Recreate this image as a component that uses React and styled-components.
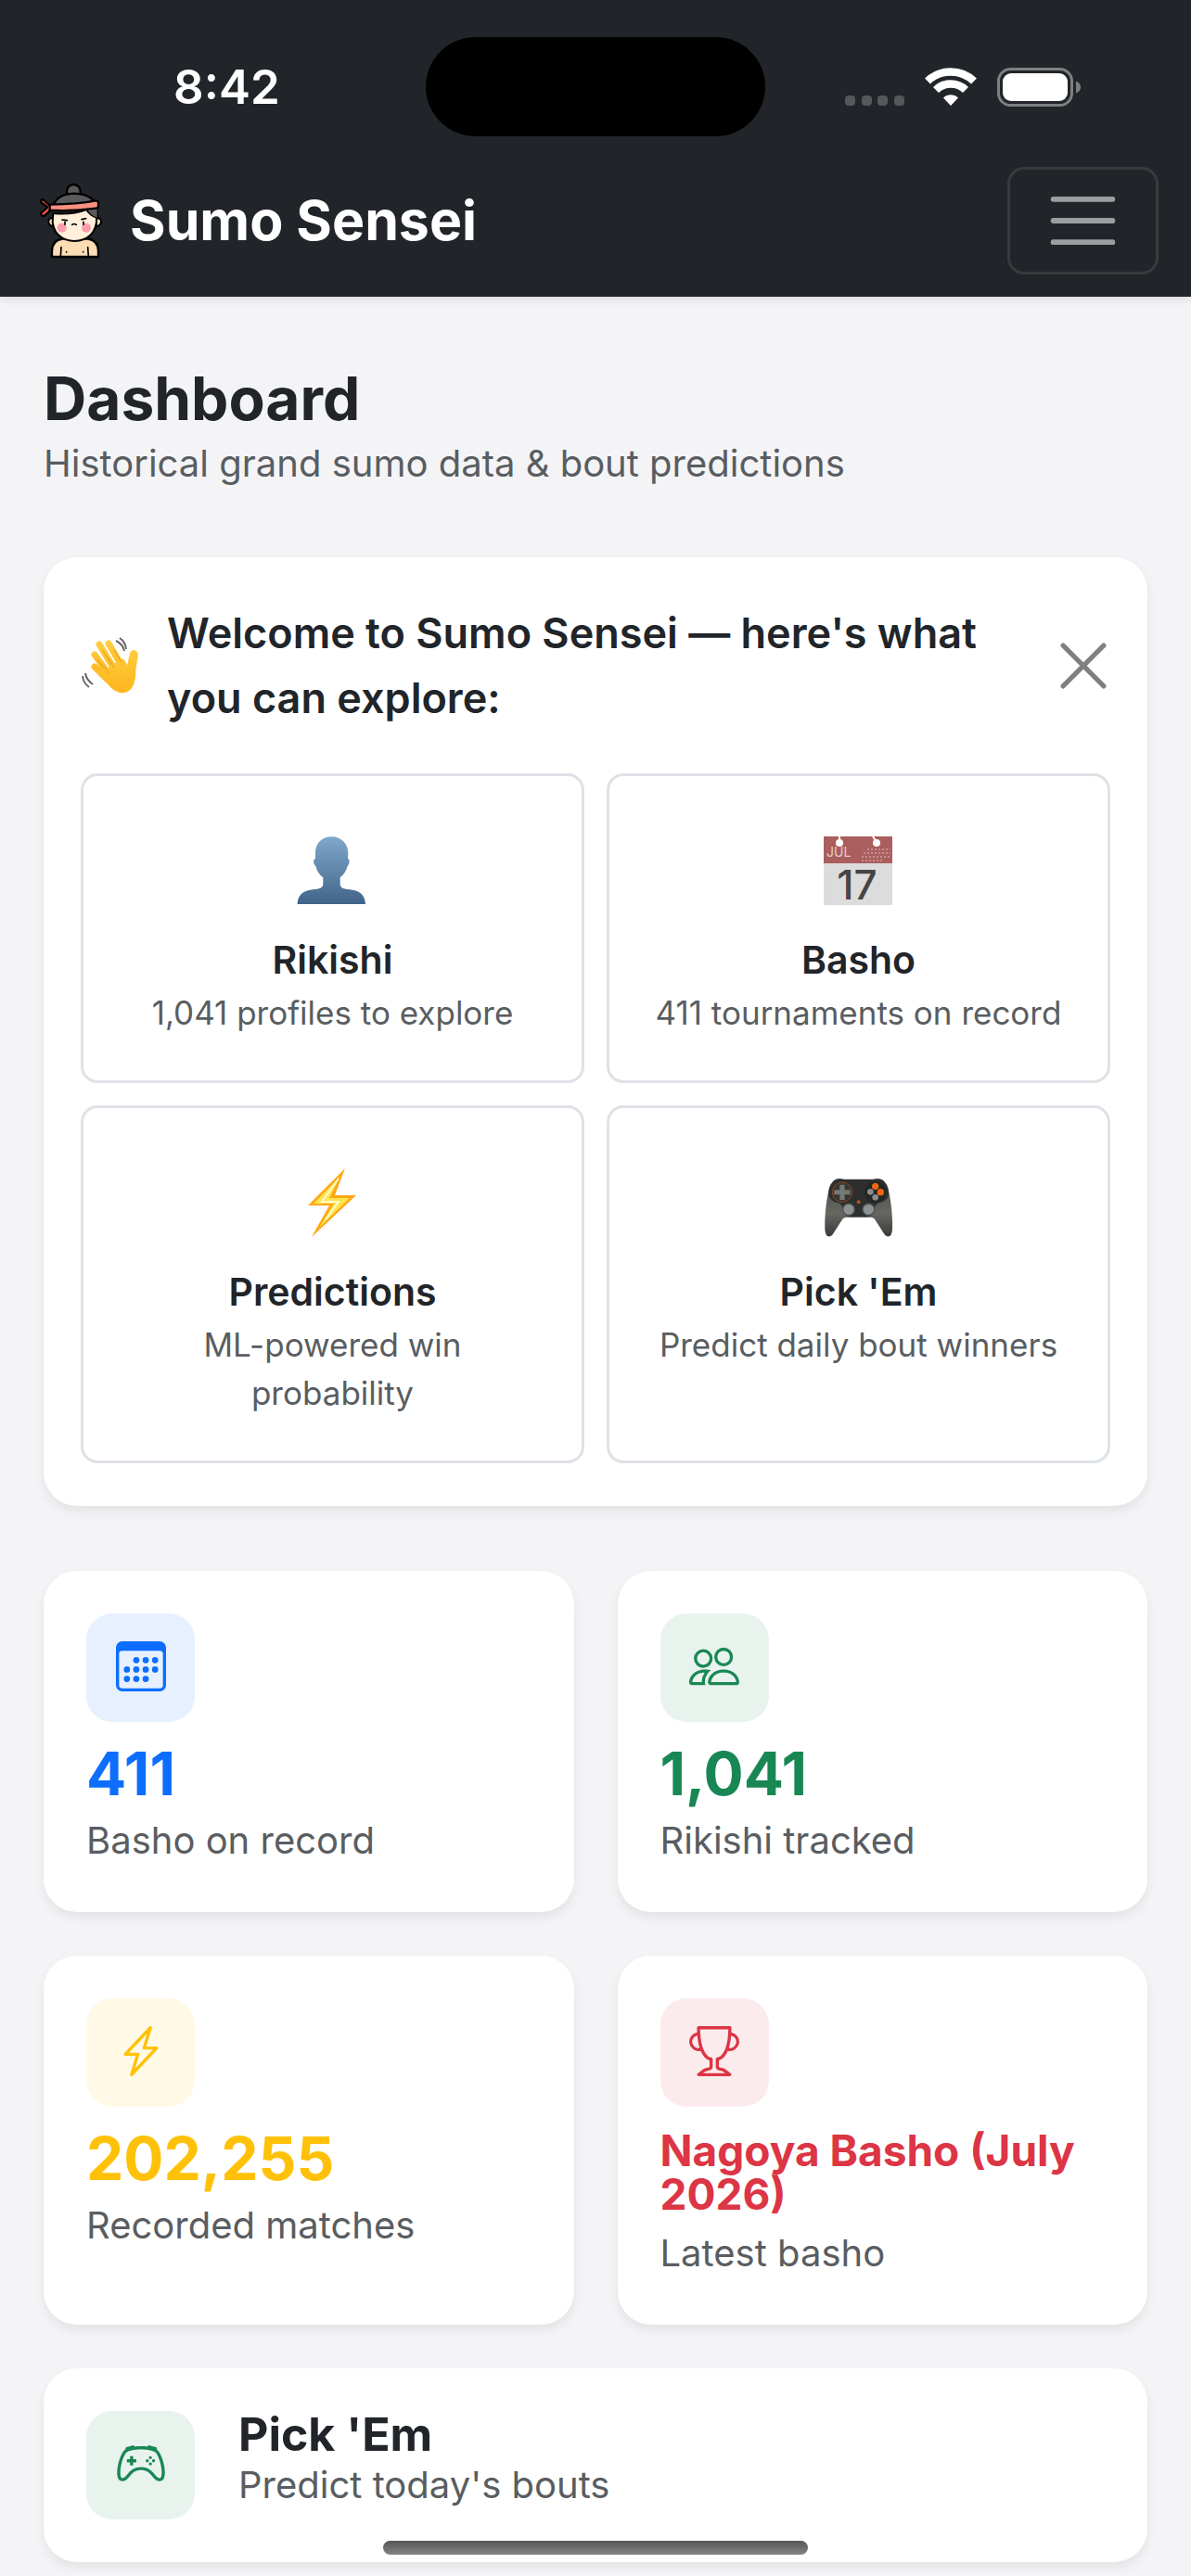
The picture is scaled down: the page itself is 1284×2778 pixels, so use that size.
import React from 'react';
import styled, { createGlobalStyle } from 'styled-components';
import {
  BsCalendar3,
  BsController,
  BsLightningCharge,
  BsPeople,
  BsTrophy,
} from 'react-icons/bs';

const tiles = [
  { icon: PersonIcon, title: 'Rikishi', text: '1,041 profiles to explore' },
  { icon: CalendarIcon, title: 'Basho', text: '411 tournaments on record' },
  { icon: BoltIcon, title: 'Predictions', text: 'ML-powered win probability' },
  { icon: GamepadIcon, title: "Pick 'Em", text: 'Predict daily bout winners' },
];

const stats = [
  { icon: BsCalendar3, value: '411', label: 'Basho on record', color: '#0d6efd', tint: '#e6f0ff' },
  { icon: BsPeople, value: '1,041', label: 'Rikishi tracked', color: '#198754', tint: '#e8f3ee' },
  { icon: BsLightningCharge, value: '202,255', label: 'Recorded matches', color: '#ffc107', tint: '#fff9e6' },
  { icon: BsTrophy, value: 'Nagoya Basho (July 2026)', label: 'Latest basho', color: '#dc3545', tint: '#fbebec', small: true },
];

const App = () => {
  return (
    <>
      <GlobalStyle />
      <Header>
        <StatusBar>
          <Time>8:42</Time>
          <Island />
          <StatusIcons />
        </StatusBar>
        <Navbar>
          <Brand href='#'>
            <Logo />
            Sumo Sensei
          </Brand>
          <Toggler type='button' aria-label='Toggle navigation'>
            <svg viewBox='0 0 30 30' fill='none' stroke='#9b9d9f' strokeWidth='2' strokeLinecap='round'>
              <path d='M4 7h22M4 15h22M4 23h22' />
            </svg>
          </Toggler>
        </Navbar>
      </Header>
      <Main>
        <PageTitle>Dashboard</PageTitle>
        <Muted>Historical grand sumo data &amp; bout predictions</Muted>
        <Welcome>
          <WelcomeHeader>
            <WaveIcon />
            <WelcomeTitle>Welcome to Sumo Sensei — here's what you can explore:</WelcomeTitle>
            <Close type='button' aria-label='Close'>
              <svg viewBox='0 0 48 48' fill='none' stroke='#808080' strokeWidth='5' strokeLinecap='round'>
                <path d='M3 3l42 42M45 3L3 45' />
              </svg>
            </Close>
          </WelcomeHeader>
          <TileGrid>
            {tiles.map(({ icon: Icon, title, text }) => (
              <Tile href='#' key={title}>
                <Icon />
                <TileTitle>{title}</TileTitle>
                <TileText>{text}</TileText>
              </Tile>
            ))}
          </TileGrid>
        </Welcome>
        <StatGrid>
          {stats.map(({ icon: Icon, value, label, color, tint, small }) => (
            <StatCard key={label}>
              <IconBox $color={color} $tint={tint}>
                <Icon />
              </IconBox>
              <StatValue $color={color} $small={small}>{value}</StatValue>
              <Muted>{label}</Muted>
            </StatCard>
          ))}
        </StatGrid>
        <PickCard href='#'>
          <IconBox $color='#198754' $tint='#e8f3ee'>
            <BsController />
          </IconBox>
          <div>
            <PickTitle>Pick 'Em</PickTitle>
            <Muted>Predict today's bouts</Muted>
          </div>
        </PickCard>
      </Main>
      <HomeIndicator />
    </>
  );
};

export default App;

function StatusIcons() {
  return (
    <StatusSvg viewBox='0 0 256 44'>
      <g fill='#55585b'>
        <rect x='0' y='31' width='11' height='11' rx='4' />
        <rect x='18' y='31' width='11' height='11' rx='4' />
        <rect x='35' y='31' width='11' height='11' rx='4' />
        <rect x='53' y='31' width='11' height='11' rx='4' />
      </g>
      <g fill='none' stroke='#fff' strokeWidth='8.5'>
        <path d='M89 15.500a36 36 0 0 1 50 0' />
        <path d='M98 25a23 23 0 0 1 32 0' />
      </g>
      <path d='M106 33.500a11.500 11.500 0 0 1 16 0L114 42z' fill='#fff' />
      <rect x='165.500' y='2.500' width='79' height='39' rx='13' fill='none' stroke='#7d8083' strokeWidth='3' />
      <rect x='170' y='7' width='70' height='30' rx='9' fill='#fff' />
      <path d='M249 15.500q5 2 5 6.500t-5 6.500z' fill='#7d8083' />
    </StatusSvg>
  );
}

function Logo() {
  return (
    <LogoSvg viewBox='30 45 219 261' stroke='#000' strokeWidth='7' strokeLinejoin='round' strokeLinecap='round'>
      <path d='M78 291v-20q2-34 34-38h82q32 4 34 38v20z' fill='#fbdcb4' />
      <path d='M106 288l2-28M196 288l-2-28' fill='none' strokeWidth='5' />
      <path d='M82 166q-16-2-15 12 2 14 16 14zM222 166q16-2 15 12-2 14-16 14z' fill='#fbdcb4' strokeWidth='6' />
      <circle cx='148' cy='79' r='22' fill='#5a5a5a' />
      <path d='M80 140q4-52 70-54 66 2 74 50l2 30h-14l-20-30z' fill='#5a5a5a' />
      <path d='M82 150q60 6 108-12 8 16 32 26v16q-10 58-72 60-62-4-70-60z' fill='#ffefdb' strokeWidth='6' />
      <path d='M192 136h32v28q-24-8-32-28z' fill='#5a5a5a' stroke='none' />
      <path d='M72 126l-22-20q-8-2-8 8l22 16-22 20q0 10 12 8l20-18z' fill='#f4533c' />
      <path d='M71 122q90-2 150-13 6 0 7 6v12q-1 6-8 7-74 10-149 6z' fill='#fa9080' />
      <circle cx='110' cy='197' r='15' fill='#ff9db0' stroke='none' />
      <circle cx='189' cy='197' r='15' fill='#ff9db0' stroke='none' />
      <path d='M111 171l16 2M174 170l14-3M120 178v9M180 178v9' fill='none' strokeWidth='5' />
      <path d='M143 187q7-5 14 0' fill='none' strokeWidth='5' />
      <path d='M125 275v1M179 275v1' fill='none' strokeWidth='5' />
    </LogoSvg>
  );
}

function WaveIcon() {
  return (
    <WaveSvg viewBox='-3 0 62 62'>
      <defs>
        <linearGradient id='hand' x1='0' y1='0' x2='0' y2='1'>
          <stop offset='0' stopColor='#ffcc3e' />
          <stop offset='1' stopColor='#fdb51c' />
        </linearGradient>
      </defs>
      <g fill='none' stroke='url(#hand)' strokeLinecap='round' strokeWidth='7'>
        <path d='M27 7l13 22M17 8l16 26M12 19l16 22M12 32l14 14' />
      </g>
      <path d='M22 36L42 23q4 3 5 8 2-9 3-14 3-5 7-2 3 2 1 10-2 9-2 18-2 15-12 17-8 1-15-6L14 37z' fill='url(#hand)' />
      <path d='M21 15l12 18M15 25l13 14M33 14l8 13' fill='none' stroke='#e89a12' strokeWidth='1' />
      <path d='M35 4q7 3 9 11M39 1q6 4 7 12M2 39q1 7 8 12M-1 42q1 8 7 12' fill='none' stroke='#666' strokeWidth='2' />
    </WaveSvg>
  );
}

function PersonIcon() {
  return (
    <TileSvg viewBox='27 57 240 240'>
      <defs>
        <linearGradient id='bust' x1='0' y1='0' x2='0' y2='1'>
          <stop offset='0' stopColor='#7fa8ca' />
          <stop offset='1' stopColor='#41648a' />
        </linearGradient>
      </defs>
      <path
        d='M142 67c34 0 55 24 54 58l-1 13c7 0 6 18-1 24-5 17-13 29-24 37v20c0 10 5 15 18 17 36 3 62 10 64 49H32c2-39 28-46 64-49 13-2 19-7 19-17v-20c-12-9-20-21-24-37-8-6-9-24-1-24v-13c-2-34 18-58 52-58z'
        fill='url(#bust)'
      />
    </TileSvg>
  );
}

function CalendarIcon() {
  return (
    <TileSvg viewBox='1 0 80 80'>
      <rect x='3' y='3' width='74' height='74' fill='#dcdcdc' />
      <path d='M3 3h74v29H3z' fill='#aa5f5e' />
      <circle cx='20' cy='10' r='4' fill='#fff' />
      <circle cx='60' cy='10' r='4' fill='#fff' />
      <path d='M20 9V3M60 9l-4-6' stroke='#fff' strokeWidth='2' />
      <g stroke='#c48f8e' strokeWidth='2' strokeDasharray='2 2'>
        <path d='M50 17h25M46 21h29M44 25h31M44 29h22' />
      </g>
      <CalendarMonth x='6' y='25'>JUL</CalendarMonth>
      <CalendarDay x='39' y='71'>17</CalendarDay>
    </TileSvg>
  );
}

function BoltIcon() {
  return (
    <TileSvg viewBox='0 0 80 80'>
      <path d='M53 3L13 43h23L17 77l48-45H42z' fill='#ffa714' />
      <path d='M48 11L19 41h22L25 67l33-32H36z' fill='#ffe44d' />
      <path d='M46 14L28 39h18L32 58' fill='none' stroke='#fffbd0' strokeWidth='2' />
    </TileSvg>
  );
}

function GamepadIcon() {
  return (
    <TileSvg viewBox='46 18 240 240'>
      <defs>
        <linearGradient id='grip' x1='0' y1='0' x2='0' y2='1'>
          <stop offset='0' stopColor='#474a47' />
          <stop offset='0.6' stopColor='#666761' />
          <stop offset='1' stopColor='#3a3b38' />
        </linearGradient>
      </defs>
      <path
        d='M88 64q12-7 30-2h94q18-5 30 2 16 10 22 44 12 62 10 118-2 24-17 21-7-2-13-14l-28-43q-4-5-12-5h-78q-8 0-12 5l-28 43q-6 12-13 14-15 3-17-21-2-56 10-118 6-34 22-44z'
        fill='url(#grip)'
      />
      <path
        d='M88 66q12-6 30-3h94q18-3 30 3 16 10 20 36 2 30-30 36-12 2-18 22-2 22-20 24h-58q-18-2-20-24-6-20-18-22-32-6-30-36 4-26 20-36z'
        fill='#2c2f2d'
      />
      <circle cx='112' cy='104' r='32' fill='#343735' stroke='#914720' strokeWidth='3' />
      <path d='M104 80h16v17h18v15h-18v17h-16v-17H86V97h18z' fill='#747975' />
      <circle cx='219' cy='104' r='34' fill='#232624' />
      <circle cx='219' cy='85' r='11' fill='#f4650f' />
      <circle cx='236' cy='104' r='11' fill='#f4650f' />
      <circle cx='203' cy='103' r='10' fill='#8b8c8f' />
      <circle cx='219' cy='121' r='10' fill='#8b8c8f' />
      <circle cx='165' cy='136' r='6' fill='#b1521b' />
      <circle cx='133' cy='160' r='19' fill='#8d9292' stroke='#4c504f' strokeWidth='4' />
      <circle cx='197' cy='160' r='19' fill='#8d9292' stroke='#4c504f' strokeWidth='4' />
    </TileSvg>
  );
}

const GlobalStyle = createGlobalStyle`
  * {
    box-sizing: border-box;
  }
  body {
    margin: 0;
    background: #f4f4f7;
    color: #212529;
    font-family: Inter, 'Liberation Sans', sans-serif;
  }
  h1, h2, h3, p {
    margin: 0;
  }
  a {
    color: inherit;
    text-decoration: none;
  }
  svg {
    display: block;
  }
`;

const Header = styled.header`
  background: #212529;
  box-shadow: 0 3px 9px rgba(0, 0, 0, 0.1);
`;

const StatusBar = styled.div`
  display: grid;
  grid-template-columns: 1fr auto 1fr;
  align-items: center;
  padding: 40px 117px 0;
  height: 147px;
`;

const Time = styled.span`
  padding-left: 70px;
  color: #fff;
  font-size: 51px;
  font-weight: 600;
  line-height: 60px;
`;

const Island = styled.div`
  width: 366px;
  height: 107px;
  border-radius: 54px;
  background: #000;
`;

const StatusSvg = styled.svg`
  justify-self: end;
  width: 256px;
  height: 44px;
`;

const Navbar = styled.nav`
  display: flex;
  align-items: center;
  justify-content: space-between;
  padding: 33px 35px 24px 40px;
`;

const Brand = styled.a`
  display: flex;
  align-items: center;
  gap: 27px;
  color: #fff;
  font-size: 59px;
  font-weight: 700;
  line-height: 84px;
`;

const LogoSvg = styled.svg`
  width: 73px;
  height: 87px;
`;

const Toggler = styled.button`
  padding: 11px 35px;
  border: 3px solid #373b3e;
  border-radius: 18px;
  background: transparent;
  svg {
    width: 87px;
    height: 88px;
  }
`;

const Main = styled.main`
  padding: 70px 47px 12px;
`;

const PageTitle = styled.h1`
  font-size: 64px;
  font-weight: 700;
  line-height: 80px;
`;

const Muted = styled.p`
  color: #595d61;
  font-size: 40px;
  line-height: 60px;
`;

const Card = styled.section`
  border-radius: 36px;
  background: #fff;
  box-shadow: 0 6px 12px rgba(0, 0, 0, 0.07);
`;

const Welcome = styled(Card)`
  margin: 71px 0 70px;
  padding: 47px 40px 46px;
`;

const WelcomeHeader = styled.div`
  display: flex;
  align-items: center;
  gap: 31px;
  margin-bottom: 46px;
`;

const WaveSvg = styled.svg`
  flex: none;
  width: 62px;
  height: 62px;
`;

const WelcomeTitle = styled.h2`
  flex: 1;
  font-size: 45px;
  font-weight: 600;
  line-height: 70px;
`;

const Close = styled.button`
  padding: 4px;
  border: 0;
  background: transparent;
  svg {
    width: 50px;
    height: 50px;
  }
`;

const TileGrid = styled.div`
  display: grid;
  grid-template-columns: 1fr 1fr;
  gap: 24px;
`;

const Tile = styled.a`
  display: flex;
  flex-direction: column;
  align-items: center;
  padding: 62px 45px 47px;
  border: 3px solid #dee2e6;
  border-radius: 18px;
  text-align: center;
`;

const TileSvg = styled.svg`
  width: 80px;
  height: 80px;
`;

const CalendarMonth = styled.text`
  fill: #e3cccc;
  font-size: 14px;
`;

const CalendarDay = styled.text`
  fill: #454545;
  font-size: 44px;
  font-weight: 500;
  text-anchor: middle;
`;

const TileTitle = styled.h3`
  margin-top: 25px;
  font-size: 41px;
  font-weight: 600;
  line-height: 62px;
`;

const TileText = styled.p`
  color: #595d61;
  font-size: 35px;
  line-height: 52px;
`;

const StatGrid = styled.div`
  display: grid;
  grid-template-columns: 1fr 1fr;
  gap: 47px;
  margin-bottom: 47px;
`;

const StatCard = styled(Card)`
  padding: 46px 46px 47px;
`;

const IconBox = styled.div`
  display: flex;
  flex: none;
  align-items: center;
  justify-content: center;
  width: 117px;
  height: 117px;
  padding-bottom: 4px;
  border-radius: 28px;
  background: ${({ $tint }) => $tint};
  color: ${({ $color }) => $color};
  font-size: 54px;
`;

const StatValue = styled.p`
  margin: 24px 0 10px;
  color: ${({ $color }) => $color};
  font-size: ${({ $small }) => ($small ? '46px' : '64px')};
  font-weight: 700;
  line-height: ${({ $small }) => ($small ? '47px' : '64px')};
`;

const PickCard = styled(Card).attrs({ as: 'a' })`
  display: flex;
  gap: 47px;
  padding: 46px;
`;

const PickTitle = styled.h2`
  font-size: 50px;
  font-weight: 700;
  line-height: 50px;
`;

const HomeIndicator = styled.div`
  position: fixed;
  bottom: 23px;
  left: 50%;
  width: 458px;
  height: 15px;
  margin-left: -229px;
  border-radius: 8px;
  background: linear-gradient(#555, #858585);
`;
